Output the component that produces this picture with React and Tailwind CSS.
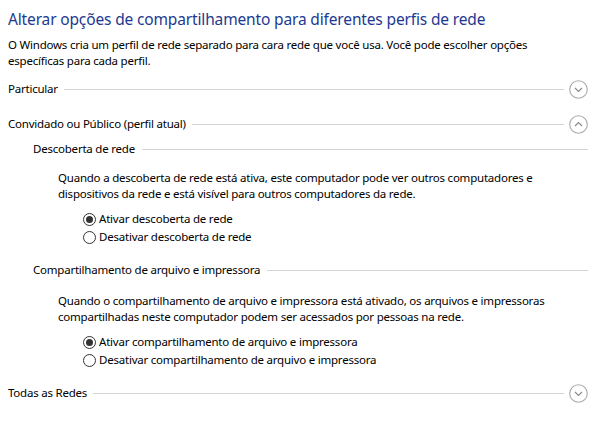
import React from 'react'

const Chevron = ({ up }) => (
  <svg width="19" height="19" viewBox="0 0 19 19" className="shrink-0">
    <circle cx="9.5" cy="9.5" r="8.8" fill="none" stroke="#a8a8a8" strokeWidth="1.1" />
    <path
      d={up ? 'M6 11 L9.5 7.6 L13 11' : 'M6 8 L9.5 11.4 L13 8'}
      fill="none"
      stroke="#8a8a8a"
      strokeWidth="1.2"
    />
  </svg>
)

const ProfileRow = ({ label, up, className = '' }) => (
  <div className={`flex items-center h-[20px] ${className}`}>
    <span>{label}</span>
    <div className="flex-1 h-px bg-[#d4d4d4] ml-[6px] mr-[5px]" />
    <Chevron up={up} />
  </div>
)

const SubHeading = ({ label, className = '' }) => (
  <div className={`flex items-center pl-[25px] ${className}`}>
    <span>{label}</span>
    <div className="flex-1 h-px bg-[#d4d4d4] ml-[7px]" />
  </div>
)

const Radio = ({ checked, label }) => (
  <label className="flex items-center h-[18px]">
    <span className="w-[13px] h-[13px] rounded-full border border-[#333] flex items-center justify-center mr-[3px]">
      {checked && <span className="w-[7px] h-[7px] rounded-full bg-[#333]" />}
    </span>
    <span>{label}</span>
  </label>
)

export default function App() {
  return (
    <div className="w-[606px] h-[435px] bg-white text-black text-[11.5px] tracking-[-0.22px] leading-4 font-['Segoe_UI','Noto_Sans',sans-serif] pl-2 pr-[18px]">
      {/* Header */}
      <h1 className="pt-[7px] text-[15.5px] tracking-[-0.15px] leading-[24px] text-[#1e3991]">
        Alterar opções de compartilhamento para diferentes perfis de rede
      </h1>
      <p className="mt-[6px]">
        O Windows cria um perfil de rede separado para cara rede que você usa. Você pode escolher opções
        <br />
        específicas para cada perfil.
      </p>

      <ProfileRow label="Particular" className="mt-[10px]" />
      <ProfileRow label="Convidado ou Público (perfil atual)" up className="mt-[15px]" />

      {/* Descoberta de rede */}
      <SubHeading label="Descoberta de rede" className="mt-[7px]" />
      <div className="pl-[50px] mt-[13px]">
        <p>
          Quando a descoberta de rede está ativa, este computador pode ver outros computadores e
          <br />
          dispositivos da rede e está visível para outros computadores da rede.
        </p>
        <div className="pl-[25px] mt-[8px]">
          <Radio checked label="Ativar descoberta de rede" />
          <Radio label="Desativar descoberta de rede" />
        </div>
      </div>

      {/* Compartilhamento */}
      <SubHeading label="Compartilhamento de arquivo e impressora" className="mt-[16px]" />
      <div className="pl-[50px] mt-[15px]">
        <p>
          Quando o compartilhamento de arquivo e impressora está ativado, os arquivos e impressoras
          <br />
          compartilhadas neste computador podem ser acessados por pessoas na rede.
        </p>
        <div className="pl-[25px] mt-[8px]">
          <Radio checked label="Ativar compartilhamento de arquivo e impressora" />
          <Radio label="Desativar compartilhamento de arquivo e impressora" />
        </div>
      </div>

      <ProfileRow label="Todas as Redes" className="mt-[14px]" />
    </div>
  )
}
